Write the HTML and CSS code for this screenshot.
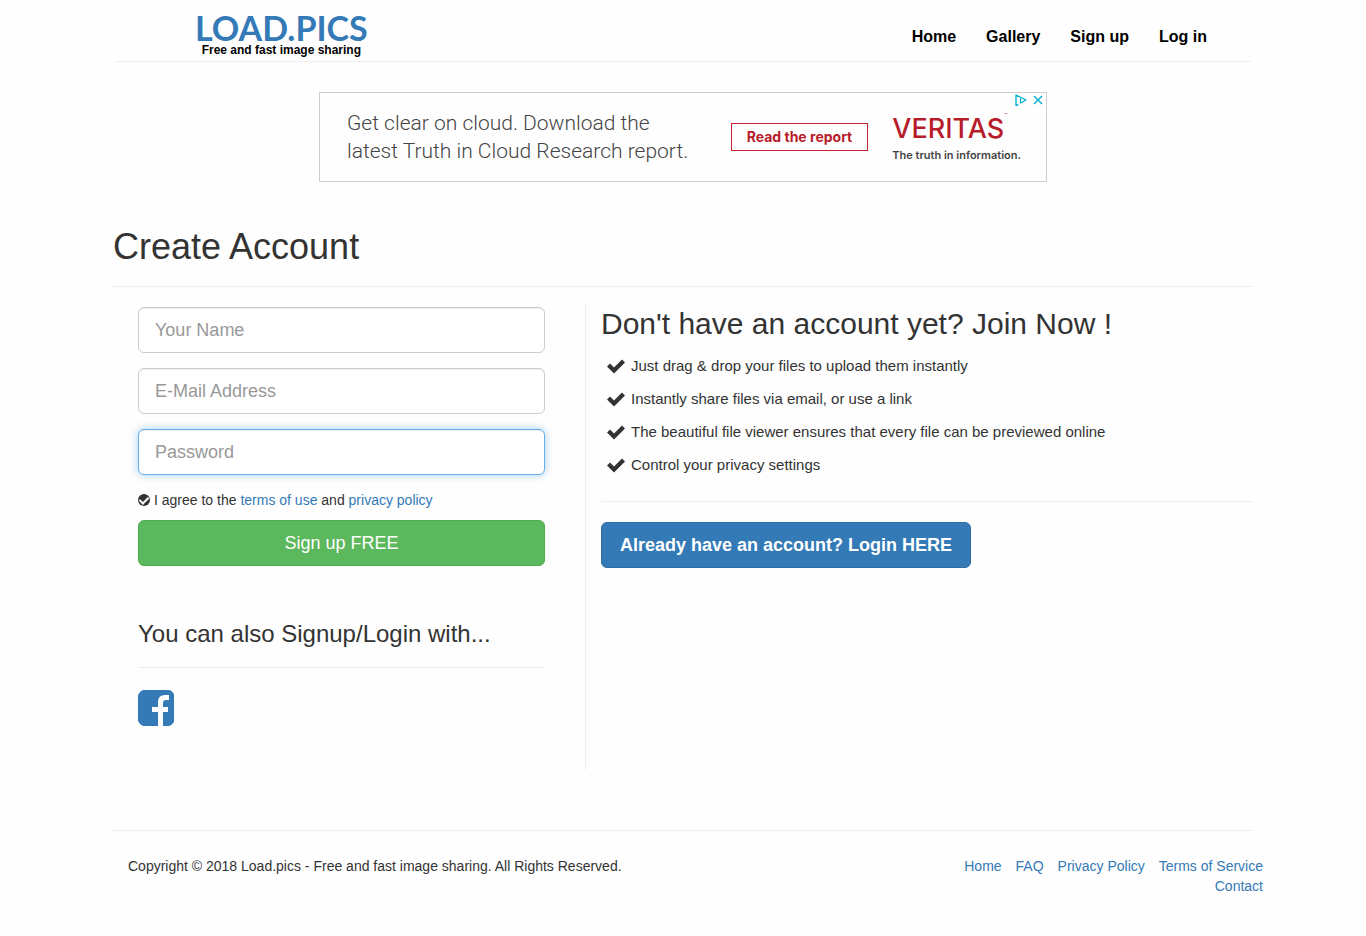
FILE: index.html
```
<!DOCTYPE html>
<html lang="en">
<head>
    <meta charset="UTF-8">
    <meta name="viewport" content="width=device-width, initial-scale=1.0">
    <title>Create Account - Load.pics</title>
    <link rel="stylesheet" href="styles.css">
</head>
<body>

    <div class="container">

        <!-- Header -->
        <header class="header">
            <a href="#" class="logo">
                <span class="logo-name">LOAD.PICS</span>
                <span class="logo-tagline">Free and fast image sharing</span>
            </a>
            <nav class="main-nav">
                <a href="#">Home</a>
                <a href="#">Gallery</a>
                <a href="#">Sign up</a>
                <a href="#">Log in</a>
            </nav>
        </header>

        <!-- Banner -->
        <aside class="banner">
            <p class="banner-text">Get clear on cloud. Download the<br>latest Truth in Cloud Research report.</p>
            <a href="#" class="banner-button">Read the report</a>
            <div class="banner-brand">
                <div class="brand-name">VERITAS<sup>™</sup></div>
                <div class="brand-slogan">The truth in information.</div>
            </div>
            <div class="banner-icons">
                <svg width="12" height="12" viewBox="0 0 12 12" fill="none" stroke="#00aecd">
                    <path d="M3.5 10.6 1 11.5V1L11 6 5.5 9V4.5" stroke-width="1.3" stroke-linejoin="round"/>
                </svg>
                <svg width="10" height="12" viewBox="0 0 10 12" fill="none" stroke="#00aecd">
                    <path d="M1 2 9 10M9 2 1 10" stroke-width="1.4"/>
                </svg>
            </div>
        </aside>

        <h1 class="page-title">Create Account</h1>

        <main class="columns">

            <!-- Sign up form -->
            <section class="signup">
                <form>
                    <input type="text" class="field" placeholder="Your Name" aria-label="Your Name">
                    <input type="email" class="field" placeholder="E-Mail Address" aria-label="E-Mail Address">
                    <input type="password" class="field active" placeholder="Password" aria-label="Password">
                    <div class="agree">
                        <input type="checkbox" id="agree" checked>
                        <label for="agree">I agree to the <a href="#">terms of use</a> and <a href="#">privacy policy</a></label>
                    </div>
                    <button type="submit" class="btn btn-green">Sign up FREE</button>
                </form>

                <h3 class="social-title">You can also Signup/Login with...</h3>
                <a href="#" class="facebook" aria-label="Facebook">
                    <svg width="36" height="36" viewBox="0 0 36 36">
                        <path fill="#337ab7" d="M5 0H31Q33 0 36 4V32Q34 35 31 36H25V22H30V17H25V13Q25 10 28 10H31V5H27Q20 5 20 12V17H14V22H20V36H5Q2 35 0 31V5Q2 1 5 0Z"/>
                    </svg>
                </a>
            </section>

            <!-- Features -->
            <section class="join">
                <h2>Don't have an account yet? Join Now !</h2>
                <ul class="features">
                    <li><svg width="20" height="16" viewBox="0 0 20 16"><path d="M1 8.5 4 5.5 8 9.5 16 1.5 19 4.5 8 15.5Z"/></svg>Just drag &amp; drop your files to upload them instantly</li>
                    <li><svg width="20" height="16" viewBox="0 0 20 16"><path d="M1 8.5 4 5.5 8 9.5 16 1.5 19 4.5 8 15.5Z"/></svg>Instantly share files via email, or use a link</li>
                    <li><svg width="20" height="16" viewBox="0 0 20 16"><path d="M1 8.5 4 5.5 8 9.5 16 1.5 19 4.5 8 15.5Z"/></svg>The beautiful file viewer ensures that every file can be previewed online</li>
                    <li><svg width="20" height="16" viewBox="0 0 20 16"><path d="M1 8.5 4 5.5 8 9.5 16 1.5 19 4.5 8 15.5Z"/></svg>Control your privacy settings</li>
                </ul>
                <button type="button" class="btn btn-blue">Already have an account? Login HERE</button>
            </section>

        </main>

        <!-- Footer -->
        <footer class="footer">
            <p>Copyright © 2018 Load.pics - Free and fast image sharing. All Rights Reserved.</p>
            <nav class="footer-nav">
                <a href="#">Home</a>
                <a href="#">FAQ</a>
                <a href="#">Privacy Policy</a>
                <a href="#">Terms of Service</a>
                <a href="#">Contact</a>
            </nav>
        </footer>

    </div>

</body>
</html>
```
FILE: styles.css
```
/* Global Styles */
* {
    box-sizing: border-box;
}

body {
    margin: 0;
    font-family: "Liberation Sans", Arial, sans-serif;
    font-size: 14px;
    line-height: 20px;
    color: #333;
    background: #fefefe;
}

a {
    color: #337ab7;
    text-decoration: none;
}

h1, h2, h3, p, ul {
    margin: 0;
    padding: 0;
    font-weight: normal;
}

.container {
    max-width: 1140px;
    margin: 0 auto;
}

/* Header */
.header {
    display: flex;
    justify-content: space-between;
    align-items: center;
    margin: 0 2px;
    padding: 12px 29px 4px 80px;
    border-bottom: 1px solid #eee;
}

.logo {
    display: flex;
    flex-direction: column;
    align-items: center;
}

.logo-name {
    font-family: Lato, sans-serif;
    font-size: 34px;
    line-height: 31px;
    font-weight: bold;
}

.logo-tagline {
    font-size: 12px;
    line-height: 14px;
    font-weight: bold;
    color: #000;
}

.main-nav {
    display: flex;
    padding-top: 4px;
}

.main-nav a {
    padding: 0 15px;
    font-size: 16px;
    font-weight: bold;
    color: #000;
}

/* Banner */
.banner {
    position: relative;
    display: flex;
    align-items: center;
    max-width: 728px;
    height: 90px;
    margin: 30px auto 45px;
    padding: 0 25px 0 27px;
    border: 1px solid #ccc;
}

.banner-text {
    flex: 1;
    font-family: Roboto, sans-serif;
    font-size: 21px;
    font-weight: 300;
    line-height: 28px;
    color: #444;
}

.banner-button {
    padding: 3px 15px;
    border: 1px solid #c8202f;
    font-family: Inter, sans-serif;
    font-weight: bold;
    color: #b71c2b;
}

.banner-brand {
    margin-left: 24px;
    padding-top: 4px;
    font-family: Inter, sans-serif;
}

.brand-name {
    font-size: 27px;
    line-height: 32px;
    font-weight: 500;
    color: #b71c2b;
}

.brand-name sup {
    font-size: 5px;
    line-height: 5px;
    vertical-align: top;
}

.brand-slogan {
    font-size: 11px;
    font-weight: 600;
    color: #444;
}

.banner-icons {
    position: absolute;
    top: 1px;
    right: 3px;
    display: flex;
    gap: 6px;
}

/* Page title */
.page-title {
    padding-bottom: 19px;
    border-bottom: 1px solid #eee;
    font-size: 36px;
    line-height: 40px;
}

.columns {
    display: grid;
    grid-template-columns: 473fr 667fr;
    margin-top: 18px;
}

/* Sign up form */
.signup {
    min-height: 465px;
    padding: 2px 40px 0 25px;
    border-right: 1px solid #eee;
}

.field {
    display: block;
    width: 100%;
    height: 46px;
    margin-bottom: 15px;
    padding: 10px 16px;
    border: 1px solid #ccc;
    border-radius: 6px;
    font-family: inherit;
    font-size: 18px;
    background: #fff;
    box-shadow: inset 0 1px 1px rgba(0, 0, 0, 0.075);
    outline: none;
}

.field::placeholder {
    color: #999;
}

.field.active,
.field:focus {
    border-color: #66afe9;
    box-shadow: inset 0 1px 1px rgba(0, 0, 0, 0.075), 0 0 8px rgba(102, 175, 233, 0.6);
}

.agree {
    display: flex;
    align-items: center;
    gap: 4px;
    margin-bottom: 10px;
}

/* Round dark tick box */
.agree input {
    appearance: none;
    display: flex;
    justify-content: center;
    width: 12px;
    height: 12px;
    margin: 0;
    border-radius: 50%;
    background: #333;
}

.agree input:checked::before {
    content: "";
    width: 4px;
    height: 7px;
    margin-top: 1px;
    border: solid #fff;
    border-width: 0 2px 2px 0;
    transform: rotate(45deg);
}

/* Buttons */
.btn {
    height: 46px;
    padding: 0 16px;
    border: 1px solid;
    border-radius: 6px;
    font-family: inherit;
    font-size: 18px;
    color: #fff;
    cursor: pointer;
}

.btn-green {
    width: 100%;
    background: #5cb85c;
    border-color: #4cae4c;
}

.btn-blue {
    padding: 0 18px;
    background: #337ab7;
    border-color: #2e6da4;
    font-weight: bold;
}

/* Social login */
.social-title {
    margin: 54px 0 22px;
    padding-bottom: 19px;
    border-bottom: 1px solid #eee;
    font-size: 24px;
    line-height: 28px;
}

.facebook svg {
    display: block;
}

/* Features */
.join {
    padding-left: 15px;
}

.join h2 {
    font-size: 30px;
    line-height: 38px;
}

.features {
    margin: 6px 0 20px;
    padding-bottom: 20px;
    border-bottom: 1px solid #eee;
    list-style: none;
}

.features li {
    display: flex;
    align-items: center;
    gap: 5px;
    padding-left: 5px;
    font-size: 15px;
    line-height: 33px;
}

.features svg {
    fill: #333;
}

/* Footer */
.footer {
    display: flex;
    justify-content: space-between;
    margin-top: 60px;
    padding: 25px 0 40px 15px;
    border-top: 1px solid #eee;
}

.footer-nav {
    display: flex;
    flex-wrap: wrap;
    justify-content: flex-end;
    column-gap: 14px;
    width: 320px;
    margin-right: -10px;
}
```
